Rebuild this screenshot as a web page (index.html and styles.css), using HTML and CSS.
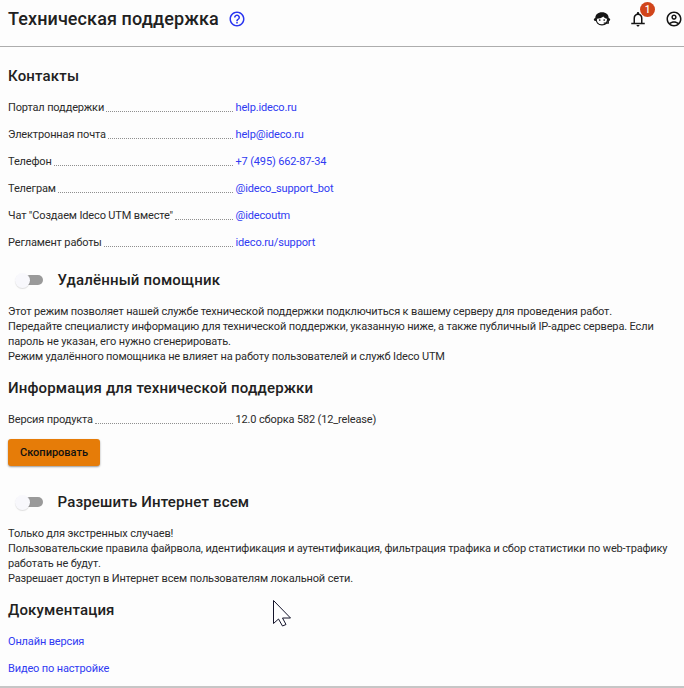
FILE: index.html
```html
<!DOCTYPE html>
<html lang="ru">
<head>
<meta charset="utf-8">
<title>Техническая поддержка</title>
<link rel="stylesheet" href="styles.css">
</head>
<body>
<header class="topbar">
  <h1 class="title">Техническая поддержка</h1>
  <svg class="help" viewBox="0 0 24 24"><path d="M11 18h2v-2h-2v2zm1-16C6.480 2 2 6.480 2 12s4.480 10 10 10 10-4.480 10-10S17.520 2 12 2zm0 18c-4.410 0-8-3.590-8-8s3.590-8 8-8 8 3.590 8 8-3.590 8-8 8zm0-14c-2.210 0-4 1.790-4 4h2c0-1.100.9-2 2-2s2 .9 2 2c0 2-3 1.750-3 5h2c0-2.250 3-2.500 3-5 0-2.210-1.790-4-4-4z"/></svg>
  <div class="actions">
    <svg class="icon face" viewBox="0 0 18 18"><path class="hair" d="M2.300 9C2 4.500 5 2.300 9 2.300s7 2.200 6.700 6.700c-2.500.1-4.300-.8-5.400-2.500C8.500 8 6 8.700 4.300 8.700z"/><path class="line" d="M3 8.500C3 12 5.200 14.900 9 14.900c2.800 0 5.500-1.800 5.700-6.400"/><circle cx="2.400" cy="9.600" r="1.500"/><circle cx="15.600" cy="9.600" r="1.500"/><circle cx="6.700" cy="10" r=".85"/><circle cx="11.200" cy="10" r=".85"/><path class="mic" d="M15.200 10.500v2.600h-4.500"/></svg>
    <div class="bell">
      <svg class="icon" viewBox="0 0 24 24"><path d="M12 22c1.100 0 2-.9 2-2h-4c0 1.100.9 2 2 2zm6-5v-6c0-3.070-1.630-5.640-4.500-6.320V4c0-.83-.67-1.500-1.500-1.500s-1.500.67-1.500 1.500v.68C7.640 5.360 6 7.920 6 11v6H3v2h18v-2h-3zm-2 0H8v-6c0-2.480 1.510-4.500 4-4.500s4 2.020 4 4.500v6z"/></svg>
      <span class="badge">1</span>
    </div>
    <svg class="icon" viewBox="0 0 24 24"><path d="M12 2C6.480 2 2 6.480 2 12s4.480 10 10 10 10-4.480 10-10S17.520 2 12 2zM7.350 18.500C8.660 17.560 10.260 17 12 17s3.340.56 4.650 1.500C15.340 19.440 13.740 20 12 20s-3.340-.56-4.650-1.500zm10.790-1.380C16.450 15.800 14.320 15 12 15s-4.450.8-6.140 2.120C4.700 15.730 4 13.950 4 12c0-4.420 3.580-8 8-8s8 3.580 8 8c0 1.950-.7 3.730-1.860 5.120z"/><path d="M12 6c-1.930 0-3.500 1.570-3.500 3.500S10.070 13 12 13s3.500-1.570 3.500-3.500S13.930 6 12 6zm0 5c-.83 0-1.500-.67-1.500-1.500S11.170 8 12 8s1.500.67 1.500 1.500S12.830 11 12 11z"/></svg>
  </div>
</header>
<main class="content">
  <section class="contacts">
    <h2>Контакты</h2>
    <div class="row"><span class="label">Портал поддержки</span><a>help.ideco.ru</a></div>
    <div class="row"><span class="label">Электронная почта</span><a>help@ideco.ru</a></div>
    <div class="row"><span class="label">Телефон</span><a>+7 (495) 662-87-34</a></div>
    <div class="row"><span class="label">Телеграм</span><a>@ideco_support_bot</a></div>
    <div class="row"><span class="label">Чат "Создаем Ideco UTM вместе"</span><a>@idecoutm</a></div>
    <div class="row"><span class="label">Регламент работы</span><a>ideco.ru/support</a></div>
  </section>
  <section class="assistant">
    <h2 class="switch-title"><span class="switch"></span>Удалённый помощник</h2>
    <p>Этот режим позволяет нашей службе технической поддержки подключиться к вашему серверу для проведения работ.<br>Передайте специалисту информацию для технической поддержки, указанную ниже, а также публичный IP-адрес сервера. Если<br>пароль не указан, его нужно сгенерировать.<br>Режим удалённого помощника не влияет на работу пользователей и служб Ideco UTM</p>
  </section>
  <section class="info">
    <h2>Информация для технической поддержки</h2>
    <div class="row"><span class="label">Версия продукта</span><span>12.0 сборка 582 (12_release)</span></div>
    <button class="copy">Скопировать</button>
  </section>
  <section class="internet">
    <h2 class="switch-title"><span class="switch"></span>Разрешить Интернет всем</h2>
    <p>Только для экстренных случаев!<br>Пользовательские правила файрвола, идентификация и аутентификация, фильтрация трафика и сбор статистики по web-трафику<br>работать не будут.<br>Разрешает доступ в Интернет всем пользователям локальной сети.</p>
  </section>
  <section class="docs">
    <h2>Документация</h2>
    <div class="row"><a>Онлайн версия</a></div>
    <div class="row"><a>Видео по настройке</a></div>
  </section>
</main>
<svg class="cursor" viewBox="0 0 20 29"><path d="M1.500 1.500v23l5-4.500 4 7 3.500-1.500-3.500-6.500h8z"/></svg>
</body>
</html>
```
FILE: styles.css
```css
* { box-sizing: border-box; }
body {
  margin: 0;
  height: 688px;
  overflow: hidden;
  background: #fdfdfd;
  border-bottom: 2px solid #c6c6c6;
  color: #2b2b2b;
  font: 400 11px/15px Roboto, "Liberation Sans", sans-serif;
  letter-spacing: -.145px;
}
.topbar {
  display: flex;
  align-items: center;
  height: 47px;
  padding: 0 0 9px 8px;
  border-bottom: 1px solid #adadad;
}
.title { margin: 0; font-size: 18px; line-height: 24px; font-weight: 500; letter-spacing: .1px; color: #212121; }
.help { width: 18px; height: 18px; margin-left: 9px; fill: #2a35f0; }
.actions { display: flex; gap: 18px; margin-left: auto; margin-right: 1px; }
.icon { display: block; width: 18px; height: 18px; fill: #151515; }
.face .line { fill: none; stroke: #151515; stroke-width: 1.2; }
.face .mic { fill: none; stroke: #151515; stroke-width: 1.4; }
.bell { position: relative; }
.badge {
  position: absolute;
  left: 11px;
  top: -8px;
  width: 15px;
  height: 15px;
  border-radius: 50%;
  background: #d1451b;
  color: #fff;
  font-size: 10px;
  line-height: 16px;
  font-weight: 500;
  letter-spacing: 0;
  text-align: center;
}
.content { padding: 17px 8px 0; }
h2 { margin: 0; font-size: 15px; line-height: 24px; font-weight: 500; letter-spacing: .17px; color: #212121; }
.row { display: flex; height: 27px; align-items: center; }
.contacts, .info, .docs { display: flex; flex-direction: column; }
.contacts h2, .info h2, .docs h2 { margin-bottom: 6px; }
.label { display: flex; width: 227.500px; flex: none; }
.label::after {
  content: "";
  flex: 1;
  height: 11px;
  margin: 0 3px 0 2px;
  border-bottom: 1px dotted #8f8f8f;
}
a { color: #2f3af2; }
.assistant { margin-top: 12px; }
.switch-title { display: flex; align-items: center; }
.switch {
  position: relative;
  width: 23px;
  height: 10px;
  margin: 0 14.500px 0 12px;
  border-radius: 5px;
  background: #9a9a9a;
}
.switch::before {
  content: "";
  position: absolute;
  left: -5px;
  top: -2px;
  width: 15px;
  height: 15px;
  border-radius: 50%;
  background: #f8f8fc;
  box-shadow: 0 1px 1px rgba(0, 0, 0, .12);
}
p { margin: 12px 0 0; white-space: nowrap; }
.info { margin-top: 12px; }
.copy {
  width: 92px;
  height: 27px;
  margin-top: 6px;
  padding: 0;
  border: 0;
  border-radius: 3px;
  background: #e67c08;
  color: #111;
  font: 500 11px/27px Roboto, "Liberation Sans", sans-serif;
  box-shadow: 0 1px 2px rgba(0, 0, 0, .4);
}
.internet { margin-top: 24px; }
.docs { margin-top: 12px; }
.cursor {
  position: absolute;
  left: 272px;
  top: 599px;
  width: 20px;
  height: 29px;
  fill: #fff;
  stroke: #14142b;
  stroke-width: 1;
}
```
